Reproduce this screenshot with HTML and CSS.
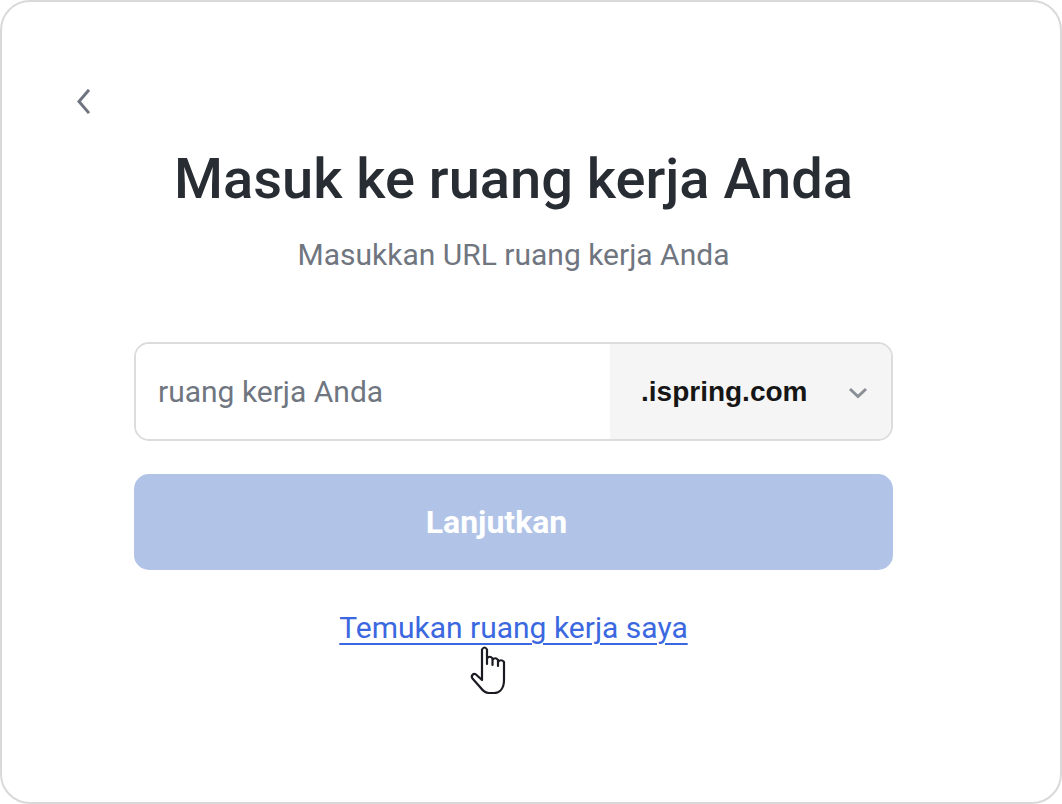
FILE: index.html
```html
<!DOCTYPE html>
<html lang="id">
<head>
<meta charset="utf-8">
<title>Masuk ke ruang kerja Anda</title>
<link rel="stylesheet" href="styles.css">
</head>
<body>
<div class="card">
  <div class="top">
    <button class="back" aria-label="Kembali">
      <svg width="18" height="26" viewBox="0 0 18 26"><path d="M13 2 L4 12.5 L13 23" fill="none" stroke="#6e7580" stroke-width="3" stroke-linecap="square"/></svg>
    </button>
  </div>
  <div class="content">
    <h1 class="title">Masuk ke ruang kerja Anda</h1>
    <p class="subtitle">Masukkan URL ruang kerja Anda</p>
    <div class="field">
      <div class="input">ruang kerja Anda</div>
      <div class="suffix">
        <span class="domain">.ispring.com</span>
        <svg class="caret" width="22" height="14" viewBox="0 0 22 14"><path d="M3 3 L11 10.5 L19 3" fill="none" stroke="#8a8f96" stroke-width="3"/></svg>
      </div>
    </div>
    <button class="submit"><span>Lanjutkan</span></button>
    <div class="linkrow">
      <a class="link" href="#">Temukan ruang kerja saya</a>
      <svg class="cursor" width="42" height="52" viewBox="0 0 42 52">
        <path d="M15 4.5 Q17.5 0.5 20 4.5 L20 19 L20 13.5 Q22.75 10 25.5 13.5 L25.5 20 L25.5 15 Q28.25 11.5 31 15 L31 21 L31 17 Q34 13.5 37 17 L37 35 C37 43 33 48 26.5 48 L22 48 C18 48 16 46 13 42 L5.5 33.5 C3.5 31 6.5 27.5 9 29.5 L15 35 Z" fill="#fff" stroke="#1a1a22" stroke-width="2.2" stroke-linejoin="round"/>
      </svg>
    </div>
  </div>
</div>
</body>
</html>
```
FILE: styles.css
```css
* { box-sizing: border-box; }
html, body { margin: 0; padding: 0; background: #fff; }
body { width: 1062px; height: 804px; font-family: Roboto, "Noto Sans", sans-serif; }

.card {
  width: 1062px;
  height: 804px;
  border: 2px solid #d9d9d9;
  border-radius: 30px;
  background: #fff;
  padding: 86px 167px 0 132px;
  position: relative;
}

.top {
  position: absolute;
  left: 71px;
  top: 85px;
}
.back {
  border: 0;
  background: none;
  padding: 0;
  width: 22px;
  height: 30px;
  display: flex;
  align-items: center;
  justify-content: center;
  cursor: pointer;
}

.content {
  display: flex;
  flex-direction: column;
  align-items: center;
  width: 759px;
}

.title {
  margin: 53px 0 0;
  font-size: 56px;
  font-weight: 500;
  line-height: 76px;
  color: #282c33;
  letter-spacing: 0;
}

.subtitle {
  margin: 20px 0 0;
  font-size: 30px;
  line-height: 36px;
  color: #70767f;
}

.field {
  margin-top: 69px;
  width: 759px;
  height: 99px;
  border: 2px solid #dcdcdc;
  border-radius: 15px;
  display: flex;
  overflow: hidden;
}
.input {
  flex: 1;
  display: flex;
  align-items: center;
  padding-left: 22px;
  font-size: 30px;
  color: #70767f;
  background: #fff;
}
.suffix {
  width: 281px;
  background: #f5f5f5;
  display: flex;
  align-items: center;
  padding-left: 31px;
  padding-right: 22px;
  justify-content: space-between;
}
.domain {
  font-family: "Liberation Sans", Arial, sans-serif;
  font-size: 28px;
  font-weight: 700;
  color: #161616;
}
.caret { display: block; margin-top: 2px; }

.submit {
  margin-top: 33px;
  width: 759px;
  height: 96px;
  border: 0;
  border-radius: 15px;
  background: #b1c4e7;
  color: #fff;
  font-family: Roboto, sans-serif;
  font-size: 32px;
  font-weight: 700;
  padding: 0 34px 0 0;
  cursor: default;
}

.linkrow {
  margin-top: 40px;
  position: relative;
}
.link {
  font-size: 30px;
  line-height: 36px;
  color: #3b68e0;
  text-decoration: underline;
  text-underline-offset: 5px;
  text-decoration-thickness: 2px;
}
.cursor {
  position: absolute;
  left: 128px;
  top: 35px;
}
```
